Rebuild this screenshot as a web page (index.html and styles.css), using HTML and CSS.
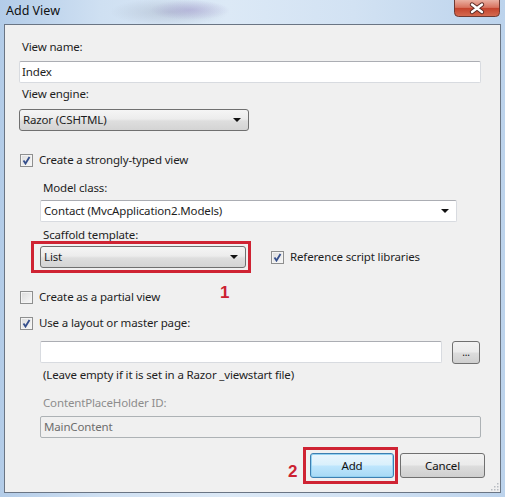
FILE: index.html
```html
<!DOCTYPE html>
<html lang="en">
<head>
<meta charset="utf-8">
<title>Add View</title>
<link rel="stylesheet" href="styles.css">
</head>
<body>
<div class="window">
  <div class="titlebar">
    <span class="title">Add View</span>
    <div class="close">
      <svg width="46" height="17" viewBox="0 0 46 17">
        <defs>
          <linearGradient id="cg" x1="0" y1="0" x2="0" y2="1">
            <stop offset="0" stop-color="#eab0a2"/>
            <stop offset="0.45" stop-color="#d8735f"/>
            <stop offset="0.5" stop-color="#c4432d"/>
            <stop offset="1" stop-color="#d56c51"/>
          </linearGradient>
        </defs>
        <path d="M0.5 0 V12.5 Q0.5 16.5 4.5 16.5 H41.5 Q45.5 16.5 45.5 12.5 V0" fill="url(#cg)" stroke="#6e3a33"/>
        <path d="M18 4.5 L28 12 M28 4.5 L18 12" stroke="#5a2a24" stroke-width="4.4" stroke-linecap="round"/>
        <path d="M18 4.5 L28 12 M28 4.5 L18 12" stroke="#ffffff" stroke-width="2.4" stroke-linecap="round"/>
      </svg>
    </div>
  </div>

  <div class="client">
    <div class="label label-first">View name:</div>
    <div class="textbox textbox-name">Index</div>

    <div class="label label-engine">View engine:</div>
    <div class="combo combo-engine">Razor (CSHTML)<span class="arrow"></span></div>

    <div class="check-row row-typed">
      <span class="checkbox is-checked"></span>Create a strongly-typed view
    </div>

    <div class="indent">
      <div class="label label-model">Model class:</div>
      <div class="combo combo-edit combo-model">Contact (MvcApplication2.Models)<span class="arrow"></span></div>

      <div class="label label-scaffold">Scaffold template:</div>
      <div class="scaffold-row">
        <div class="callout-wrap">
          <div class="combo combo-list">List<span class="arrow"></span></div>
          <div class="callout callout-list"></div>
          <span class="step step-1">1</span>
        </div>
        <div class="check-row">
          <span class="checkbox is-checked"></span>Reference script libraries
        </div>
      </div>
    </div>

    <div class="check-row row-partial">
      <span class="checkbox"></span>Create as a partial view
    </div>
    <div class="check-row row-layout">
      <span class="checkbox is-checked"></span>Use a layout or master page:
    </div>

    <div class="indent">
      <div class="layout-row">
        <div class="textbox textbox-layout"></div>
        <div class="btn btn-browse">...</div>
      </div>
      <div class="hint">(Leave empty if it is set in a Razor _viewstart file)</div>
      <div class="label label-disabled">ContentPlaceHolder ID:</div>
      <div class="textbox textbox-disabled">MainContent</div>
    </div>

    <div class="actions">
      <div class="callout-wrap">
        <span class="step step-2">2</span>
        <div class="btn btn-default">Add</div>
        <div class="callout callout-add"></div>
      </div>
      <div class="btn btn-cancel">Cancel</div>
    </div>

    <svg class="grip" width="9" height="9" viewBox="0 0 9 9">
      <g fill="#b8bcc2">
        <rect x="7" y="1" width="1.5" height="1.5"/>
        <rect x="4" y="4" width="1.5" height="1.5"/>
        <rect x="7" y="4" width="1.5" height="1.5"/>
        <rect x="1" y="7" width="1.5" height="1.5"/>
        <rect x="4" y="7" width="1.5" height="1.5"/>
        <rect x="7" y="7" width="1.5" height="1.5"/>
      </g>
    </svg>
  </div>
</div>
</body>
</html>
```

FILE: styles.css
```css
* {
  box-sizing: border-box;
}

html, body {
  margin: 0;
  padding: 0;
}

body {
  width: 505px;
  height: 497px;
  overflow: hidden;
  font-family: "Noto Sans", "Open Sans", sans-serif;
  font-size: 11.5px;
  letter-spacing: -0.15px;
  color: #1e1e1e;
}

/* Aero glass frame */
.window {
  width: 505px;
  height: 497px;
  display: flex;
  flex-direction: column;
  padding: 0 4px 4px 4px;
  background:
    radial-gradient(ellipse 40px 10px at 190px 10px, rgba(150, 130, 200, 0.35), transparent),
    radial-gradient(ellipse 60px 14px at 170px 12px, rgba(140, 150, 170, 0.35), transparent),
    linear-gradient(to right, #b3cce8 0%, #cfe0f2 20%, #dce9f6 45%, #d2e2f3 70%, #bcd3ec 100%);
}

.titlebar {
  height: 24px;
  flex: none;
  display: flex;
  justify-content: space-between;
  align-items: flex-start;
  padding-left: 2px;
}

.title {
  line-height: 22px;
  font-size: 12.5px;
  letter-spacing: 0;
  color: #111;
}

.close {
  display: flex;
  margin-right: 1px;
}

.client {
  position: relative;
  flex: 1;
  display: flex;
  flex-direction: column;
  background: #f0f0f0;
  border: 1px solid #6a7584;
  padding: 14px 19px 0 14px;
}

.label {
  line-height: 16px;
  padding-left: 3px;
}

.label-engine { margin-top: 3px; }
.label-model { margin-top: 12px; }
.label-scaffold { margin-top: 5px; }
.label-disabled { margin-top: 12px; color: #8d8d8d; }

.textbox {
  height: 22px;
  background: #fff;
  border: 1px solid #d8dbe0;
  border-top-color: #abadb3;
  border-radius: 2px;
  padding-left: 2px;
  line-height: 20px;
}

.textbox-name { margin-top: 6px; }

.combo {
  position: relative;
  height: 22px;
  line-height: 20px;
  padding-left: 3px;
  border: 1px solid #707070;
  border-radius: 3px;
  background: linear-gradient(#f5f5f5 0%, #ececec 45%, #dedede 55%, #d4d4d4 100%);
}

.arrow {
  position: absolute;
  right: 7px;
  top: 8px;
  width: 0;
  height: 0;
  border-left: 4px solid transparent;
  border-right: 4px solid transparent;
  border-top: 4px solid #111;
}

.combo-engine {
  width: 230px;
  margin-top: 7px;
}

.combo-edit {
  background: #fff;
  border-color: #abadb3 #d8dbe0 #d8dbe0 #d8dbe0;
  border-radius: 2px;
}

.combo-model {
  width: 417px;
  margin-top: 4px;
}

.combo-list {
  width: 206px;
}

.check-row {
  display: flex;
  align-items: center;
  gap: 6px;
  line-height: 16px;
  padding-left: 1px;
}

.row-typed { margin-top: 21px; }
.row-partial { margin-top: 21px; }
.row-layout { margin-top: 10px; }

.checkbox {
  width: 13px;
  height: 13px;
  flex: none;
  border: 1px solid #8e8f8f;
  background: linear-gradient(135deg, #dcdcdc, #f8f8f8);
  box-shadow: inset 0 0 0 1px #f4f4f4;
}

.checkbox.is-checked {
  background:
    url("data:image/svg+xml;utf8,<svg xmlns='http://www.w3.org/2000/svg' width='11' height='11'><path d='M2.5 5.5 L4.5 8.5 L8.5 2' fill='none' stroke='%23354f8c' stroke-width='1.8'/></svg>") center / 11px 11px no-repeat,
    linear-gradient(135deg, #dcdcdc, #f8f8f8);
}

.indent {
  display: flex;
  flex-direction: column;
  margin-left: 21px;
}

.scaffold-row {
  display: flex;
  align-items: center;
  gap: 24px;
  margin-top: 3px;
}

.callout-wrap {
  position: relative;
  display: flex;
}

.callout {
  position: absolute;
  border: 3px solid #cf2333;
  pointer-events: none;
}

.callout-list {
  left: -9px;
  top: -5px;
  width: 220px;
  height: 32px;
}

.step {
  position: absolute;
  color: #cc2131;
  font-family: "Liberation Sans", sans-serif;
  font-weight: bold;
  font-size: 17px;
  line-height: 18px;
  letter-spacing: 0;
}

.step-1 {
  left: 180px;
  top: 38px;
}

.layout-row {
  display: flex;
  gap: 10px;
  margin-top: 10px;
}

.textbox-layout {
  width: 402px;
}

.hint {
  margin-top: 3px;
  padding-left: 3px;
  line-height: 16px;
}

.textbox-disabled {
  margin-top: 5px;
  background: #f0f0f0;
  border-color: #adb2b5;
  color: #6d6d6d;
  padding-left: 3px;
}

.btn {
  display: flex;
  align-items: center;
  justify-content: center;
  border: 1px solid #707070;
  border-radius: 3px;
  background: linear-gradient(#f2f2f2 0%, #ebebeb 48%, #dddddd 52%, #cfcfcf 100%);
  color: #111;
}

.btn-browse {
  width: 28px;
  height: 23px;
  font-size: 10px;
  line-height: 10px;
  padding-bottom: 2px;
}

.actions {
  display: flex;
  justify-content: flex-end;
  gap: 6px;
  margin-top: 15px;
  margin-right: -4px;
}

.btn-default {
  width: 84px;
  height: 25px;
  border-color: #3c7fb1;
  background: linear-gradient(#eaf6fd 0%, #d9f0fc 48%, #bee6fd 52%, #a7d9f5 100%);
  box-shadow: inset 0 0 0 1px #94d2f2;
}

.btn-cancel {
  width: 85px;
  height: 25px;
}

.callout-add {
  left: -7px;
  top: -6px;
  width: 95px;
  height: 37px;
}

.step-2 {
  left: -22px;
  top: 10px;
}

.grip {
  position: absolute;
  right: 1px;
  bottom: 1px;
}
```
